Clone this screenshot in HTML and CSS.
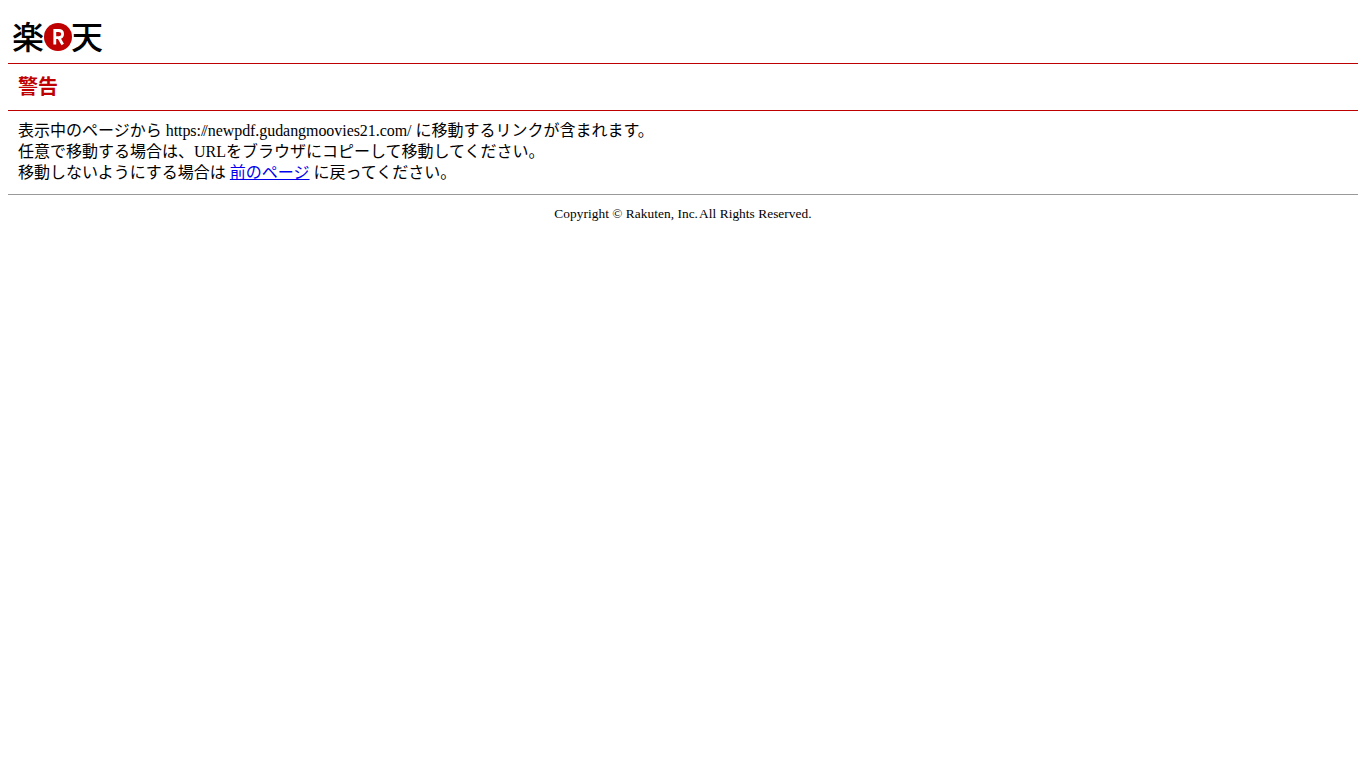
FILE: index.html
```html
<!DOCTYPE html>
<html lang="ja">
<head>
<meta charset="utf-8">
<title>警告</title>
<link rel="stylesheet" href="styles.css">
</head>
<body>
<header class="logo">
  <span class="logo-kanji">楽</span>
  <svg class="logo-mark" width="28" height="28" viewBox="0 0 28 28" aria-hidden="true">
    <circle cx="14" cy="14" r="14" fill="#bf0000"/>
    <path d="M10.8 21.5V7.5h3.9c2.5 0 3.9 1.3 3.9 3.6 0 2.2-1.4 3.6-3.9 3.6h-3.9M14.9 14.7l3.8 6.8" fill="none" stroke="#fff" stroke-width="2.8"/>
  </svg>
  <span class="logo-kanji">天</span>
</header>
<h1 class="title">警告</h1>
<main class="message">
  <div>表示中のページから <span class="url">https:<span class="tight-slash">/</span>/newpdf.gudangmoovies21.com/</span> に移動するリンクが含まれます。</div>
  <div>任意で移動する場合は、URLをブラウザにコピーして移動してください。</div>
  <div>移動しないようにする場合は <a href="#">前のページ</a> に戻ってください。</div>
</main>
<footer class="copyright">Copyright © Rakuten, Inc<span class="tight-dot">.</span> All Rights Reserved.</footer>
</body>
</html>
```
FILE: styles.css
```css
html, body {
  background: #fff;
}
body {
  margin: 0 8px;
  color: #000;
  font-family: "Liberation Serif", "Noto Sans CJK JP", serif;
  font-size: 16px;
}
.logo {
  display: flex;
  align-items: center;
  height: 64px;
  padding: 11px 0 0 4px;
  box-sizing: border-box;
  border-bottom: 1px solid #bf0000;
}
.logo-kanji {
  font-family: "Noto Sans CJK JP", sans-serif;
  font-size: 32px;
  line-height: 30px;
  width: 31px;
  margin-bottom: 4px;
  text-align: center;
  font-weight: 500;
}
.logo-mark {
  margin: 0 -1px 0 1px;
  flex: none;
}
.title {
  margin: 0;
  padding: 0 10px;
  height: 46px;
  line-height: 46px;
  font-size: 20px;
  font-weight: bold;
  color: #bf0000;
  border-bottom: 1px solid #bf0000;
}
.message {
  padding: 9px 10px 11px;
  line-height: 21px;
  border-bottom: 1px solid #999;
}
.url {
  letter-spacing: -0.06px;
}
.tight-slash {
  letter-spacing: -2px;
}
.copyright {
  margin-top: 10px;
  text-align: center;
  font-size: 13.33px;
  line-height: 18px;
  letter-spacing: 0.055px;
}
.tight-dot {
  letter-spacing: -1.5px;
}
```
